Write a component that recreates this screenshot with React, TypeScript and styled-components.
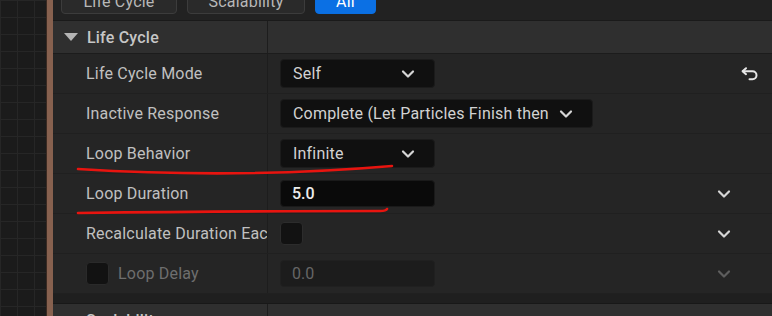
import React from "react";
import styled, { createGlobalStyle } from "styled-components";

const GlobalStyle = createGlobalStyle`
  html, body { margin: 0; padding: 0; background: #1f1f1f; overflow: hidden; }
  * { box-sizing: border-box; }
  body { font-family: Roboto, "Noto Sans", "Liberation Sans", sans-serif; }
`;

const Page = styled.div`
  position: relative;
  display: flex;
  width: 772px;
  height: 316px;
  overflow: hidden;
`;

const GridArea = styled.div`
  width: 46px;
  flex: none;
  background-color: #1b1b1b;
  background-image:
    linear-gradient(to right, #262626 1px, transparent 1px),
    linear-gradient(to bottom, #262626 1px, transparent 1px);
  background-size: 17px 17px;
  background-position: 0 0;
`;

const BrownBar = styled.div`
  width: 7px;
  flex: none;
  background: #87614f;
  border-left: 1px solid #3a2a22;
`;

const Panel = styled.div`
  flex: 1;
  display: flex;
  flex-direction: column;
  background: #242424;
  min-width: 0;
`;

const Toolbar = styled.div`
  margin-top: -12px;
  height: 33px;
  display: flex;
  align-items: flex-start;
  gap: 8px;
  padding: 0 0 0 8px;
  background: #222222;
  border-bottom: 1px solid #1a1a1a;
  flex: none;
`;

const FilterButton = styled.div<{ $w: number; $active?: boolean }>`
  width: ${(p) => p.$w}px;
  height: 26px;
  border-radius: 4px;
  border: 1px solid ${(p) => (p.$active ? "#0b6fe0" : "#3c3c3c")};
  background: ${(p) => (p.$active ? "#0b70e4" : "#2a2a2a")};
  color: ${(p) => (p.$active ? "#ffffff" : "#b8b8b8")};
  font-size: 16px;
  letter-spacing: 0.2px;
  display: flex;
  align-items: center;
  justify-content: center;
  margin-right: ${(p) => (p.$active ? 0 : 2)}px;
`;

const CategoryHeader = styled.div`
  height: 33px;
  flex: none;
  display: grid;
  grid-template-columns: 214px 1px 1fr;
  background: #2f2f2f;
  border-bottom: 1px solid #1c1c1c;
`;

const HeaderLabel = styled.div<{ $indent?: boolean }>`
  display: flex;
  align-items: center;
  padding-left: ${(p) => (p.$indent ? 33 : 11)}px;
  gap: 9px;
  color: #c6c6c6;
  font-size: 16px;
  font-weight: 500;
  letter-spacing: 0.2px;
  white-space: nowrap;
  overflow: hidden;
`;

const Triangle = styled.span`
  width: 0;
  height: 0;
  border-left: 7px solid transparent;
  border-right: 7px solid transparent;
  border-top: 8px solid #b4b4b4;
`;

const Divider = styled.div`
  background: #1d1d1d;
`;

const Row = styled.div`
  height: 40px;
  flex: none;
  display: grid;
  grid-template-columns: 214px 1px 1fr;
  background: #252525;
  border-bottom: 1px solid #202020;
`;

const LabelCell = styled.div<{ $disabled?: boolean }>`
  display: flex;
  align-items: center;
  gap: 9px;
  padding-left: 33px;
  padding-right: 6px;
  color: ${(p) => (p.$disabled ? "#6e6e6e" : "#c0c0c0")};
  font-size: 16px;
  letter-spacing: 0.2px;
  white-space: nowrap;
  overflow: hidden;
`;

const ValueCell = styled.div`
  display: grid;
  grid-template-columns: 1fr 26px 26px;
  align-items: center;
  padding-left: 12px;
  padding-right: 9px;
`;

const Combo = styled.div<{ $w: number }>`
  width: ${(p) => p.$w}px;
  height: 29px;
  border-radius: 4px;
  background: #101010;
  border: 1px solid #1b1b1b;
  display: flex;
  align-items: center;
  justify-content: space-between;
  padding: 0 18px 0 12px;
  color: #d2d2d2;
  font-size: 16px;
  letter-spacing: 0.2px;
  white-space: nowrap;
`;

const NumberBox = styled.div<{ $disabled?: boolean }>`
  width: 155px;
  height: 27px;
  border-radius: 4px;
  background: ${(p) => (p.$disabled ? "#1c1c1c" : "#0a0a0a")};
  border: 1px solid ${(p) => (p.$disabled ? "#202020" : "#1a1a1a")};
  display: flex;
  align-items: center;
  padding-left: 11px;
  color: ${(p) => (p.$disabled ? "#666666" : "#ececec")};
  font-size: 16px;
  font-weight: ${(p) => (p.$disabled ? 400 : 500)};
`;

const CheckBox = styled.div<{ $dim?: boolean }>`
  width: 23px;
  height: 23px;
  flex: none;
  border-radius: 4px;
  background: #121212;
  border: 1px solid ${(p) => (p.$dim ? "#2a2a2a" : "#2c2c2c")};
`;

const Slot = styled.div`
  display: flex;
  align-items: center;
  justify-content: center;
`;

const Gap = styled.div`
  height: 10px;
  flex: none;
  background: #1f1f1f;
  border-bottom: 1px solid #181818;
`;

const Annotations = styled.svg`
  position: absolute;
  left: 0;
  top: 0;
  pointer-events: none;
`;

const Chevron = ({ color = "#d6d6d6" }: { color?: string }) => (
  <svg width="16" height="16" viewBox="0 0 16 16" fill="none">
    <path d="M3 5.5 L8 10.5 L13 5.5" stroke={color} strokeWidth="2.2" strokeLinecap="round" strokeLinejoin="round" />
  </svg>
);

const ResetIcon = () => (
  <svg width="18" height="14" viewBox="0 0 18 14" fill="none">
    <path d="M5 1.2 L1.6 4.2 L5 7.2" stroke="#e6e6e6" strokeWidth="2" strokeLinecap="round" strokeLinejoin="round" />
    <path d="M2 4.2 H11.5 a4 4 0 0 1 0 8 H8.5" stroke="#e6e6e6" strokeWidth="2" strokeLinecap="round" strokeLinejoin="round" />
  </svg>
);

export default function App() {
  return (
    <>
      <GlobalStyle />
      <Page>
        <GridArea />
        <BrownBar />
        <Panel>
          <Toolbar>
            <FilterButton $w={116}>Life Cycle</FilterButton>
            <FilterButton $w={118}>Scalability</FilterButton>
            <FilterButton $w={61} $active>All</FilterButton>
          </Toolbar>
          <CategoryHeader>
            <HeaderLabel>
              <Triangle />
              Life Cycle
            </HeaderLabel>
            <Divider />
            <div />
          </CategoryHeader>

          <Row>
            <LabelCell>Life Cycle Mode</LabelCell>
            <Divider />
            <ValueCell>
              <Combo $w={155}>
                <span>Self</span>
                <Chevron />
              </Combo>
              <Slot />
              <Slot>
                <ResetIcon />
              </Slot>
            </ValueCell>
          </Row>

          <Row>
            <LabelCell>Inactive Response</LabelCell>
            <Divider />
            <ValueCell>
              <Combo $w={313}>
                <span>Complete (Let Particles Finish then</span>
                <Chevron />
              </Combo>
              <Slot />
              <Slot />
            </ValueCell>
          </Row>

          <Row>
            <LabelCell>Loop Behavior</LabelCell>
            <Divider />
            <ValueCell>
              <Combo $w={155}>
                <span>Infinite</span>
                <Chevron />
              </Combo>
              <Slot />
              <Slot />
            </ValueCell>
          </Row>

          <Row>
            <LabelCell>Loop Duration</LabelCell>
            <Divider />
            <ValueCell>
              <NumberBox>5.0</NumberBox>
              <Slot>
                <Chevron />
              </Slot>
              <Slot />
            </ValueCell>
          </Row>

          <Row>
            <LabelCell>Recalculate Duration Each Loop</LabelCell>
            <Divider />
            <ValueCell>
              <CheckBox />
              <Slot>
                <Chevron />
              </Slot>
              <Slot />
            </ValueCell>
          </Row>

          <Row>
            <LabelCell $disabled>
              <CheckBox $dim />
              Loop Delay
            </LabelCell>
            <Divider />
            <ValueCell>
              <NumberBox $disabled>0.0</NumberBox>
              <Slot>
                <Chevron color="#5e5e5e" />
              </Slot>
              <Slot />
            </ValueCell>
          </Row>

          <Gap />

          <CategoryHeader>
            <HeaderLabel $indent>Scalability</HeaderLabel>
            <Divider />
            <div />
          </CategoryHeader>
        </Panel>

        <Annotations width="772" height="316" viewBox="0 0 772 316">
          <path d="M78 169 Q 240 179 392 166" stroke="#e8140f" strokeWidth="2.6" fill="none" strokeLinecap="round" />
          <path d="M78 213 Q 250 211 380 211 Q 386 211 387 209" stroke="#e8140f" strokeWidth="2.6" fill="none" strokeLinecap="round" />
        </Annotations>
      </Page>
    </>
  );
}
